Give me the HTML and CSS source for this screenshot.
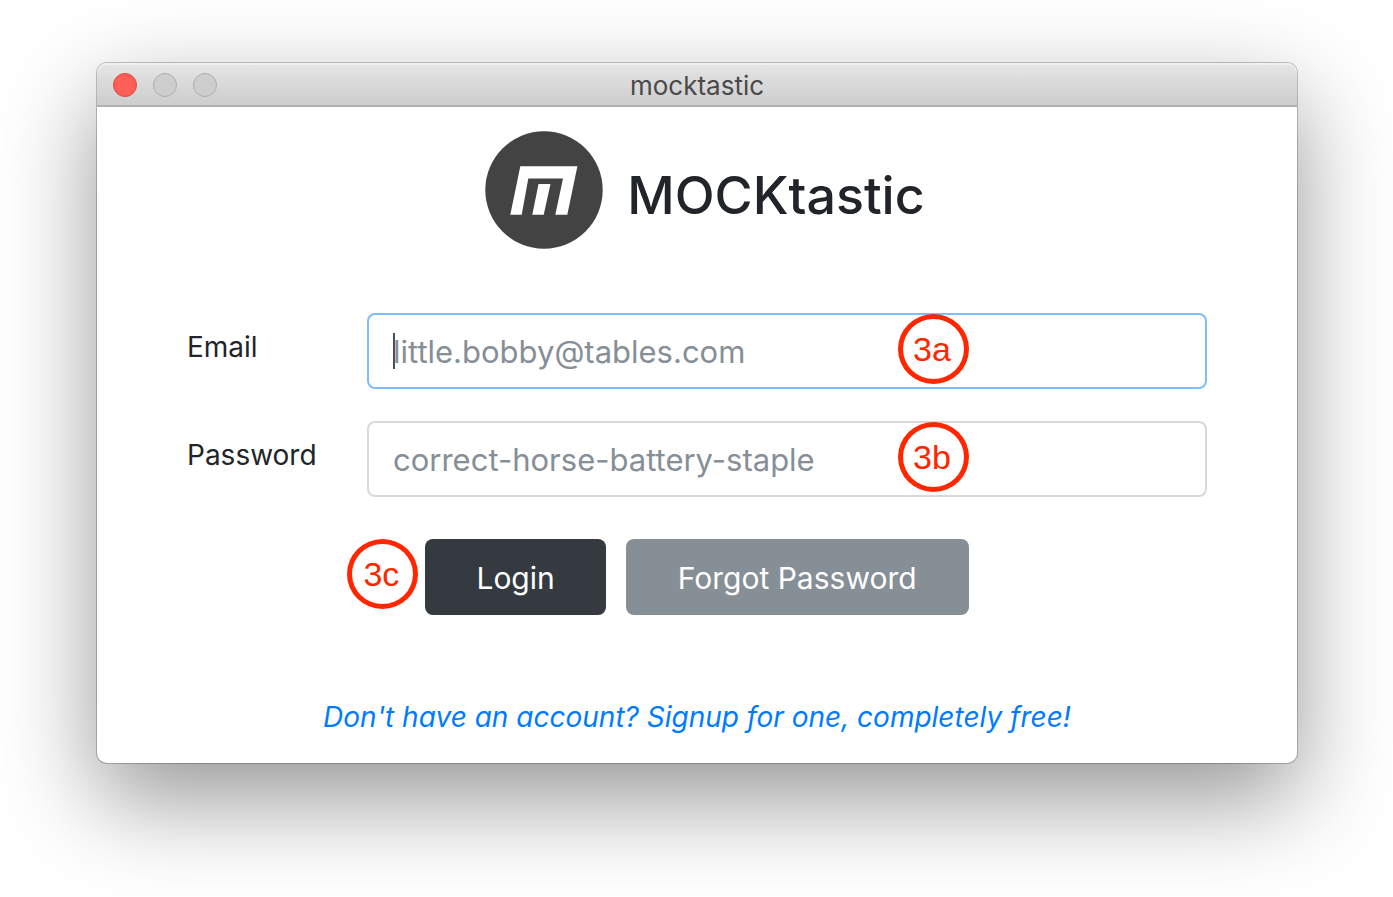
FILE: index.html
```html
<!DOCTYPE html>
<html lang="en">
<head>
<meta charset="utf-8">
<meta name="viewport" content="width=device-width, initial-scale=1">
<title>mocktastic</title>
<link rel="stylesheet" href="styles.css">
</head>
<body>
<main class="window">
  <header class="titlebar">
    <div class="controls">
      <button class="control control-close" type="button" aria-label="Close"></button>
      <button class="control" type="button" aria-label="Minimize"></button>
      <button class="control" type="button" aria-label="Zoom"></button>
    </div>
    <span class="window-title">mocktastic</span>
  </header>
  <div class="content">
    <div class="brand">
      <svg class="logo" viewBox="0 0 118 118" aria-hidden="true">
        <circle cx="59" cy="59" r="58.7" fill="#434344"/>
        <path fill="#fff" d="M35.3 35.2H92.4L82.3 83.7H70.3L78 47.5H43.3L36.7 83.7H25.3ZM53.5 53H65.5L58.7 83.7H47.3Z"/>
      </svg>
      <h1 class="brand-name">MOCKtastic</h1>
    </div>
    <form class="form">
      <div class="field">
        <label class="label" for="email">Email</label>
        <div class="input-wrap">
          <input class="input input-active" id="email" type="email" placeholder="little.bobby@tables.com">
          <span class="caret"></span>
          <span class="badge badge-field">3a</span>
        </div>
      </div>
      <div class="field">
        <label class="label" for="password">Password</label>
        <div class="input-wrap">
          <input class="input" id="password" type="password" placeholder="correct-horse-battery-staple">
          <span class="badge badge-field">3b</span>
        </div>
      </div>
      <div class="actions">
        <button class="button button-dark" type="submit">Login</button>
        <button class="button button-gray" type="button">Forgot Password</button>
        <span class="badge badge-action">3c</span>
      </div>
    </form>
    <a class="signup" href="#signup">Don't have an account? Signup for one, completely free!</a>
  </div>
</main>
</body>
</html>
```
FILE: styles.css
```css
* {
  box-sizing: border-box;
}

body {
  margin: 0;
  padding: 63px 96px 134px 97px;
  background: #fff;
  color: #212529;
  font-family: Inter, "Liberation Sans", sans-serif;
}

.window {
  border-radius: 10px;
  background: #fff;
  box-shadow: 0 0 0 1px rgba(0, 0, 0, 0.22), 0 36px 96px rgba(0, 0, 0, 0.42);
}

.titlebar {
  display: grid;
  grid-template-columns: 1fr auto 1fr;
  align-items: center;
  height: 44px;
  padding: 2px 16px 0;
  border-bottom: 2px solid #b0b0b0;
  border-radius: 10px 10px 0 0;
  background: linear-gradient(#e6e6e6, #cdcdcd);
  box-shadow: inset 0 2px 0 #f0f0f0;
}

.controls {
  display: flex;
  gap: 16px;
}

.control {
  width: 24px;
  height: 24px;
  padding: 0;
  border: 1px solid #adadad;
  border-radius: 50%;
  background: #cecece;
}

.control-close {
  border-color: #e2463f;
  background: #ff5f57;
}

.window-title {
  padding-top: 2px;
  color: #4a4a4a;
  font-size: 26px;
  line-height: 32px;
}

.content {
  display: flex;
  flex-direction: column;
  align-items: center;
  padding: 24px 90px 25px;
}

.brand {
  display: flex;
  align-items: center;
  gap: 24px;
  padding-left: 16px;
}

.logo {
  width: 118px;
  height: 118px;
}

.brand-name {
  margin: 0;
  padding-top: 12px;
  font-size: 52px;
  font-weight: 500;
  line-height: 64px;
}

.form {
  display: flex;
  flex-direction: column;
  width: 100%;
  gap: 32px;
  margin-top: 64px;
}

.field {
  display: grid;
  grid-template-columns: 180px 1fr;
}

.label {
  padding-top: 13px;
  font-size: 28px;
  line-height: 42px;
}

.input-wrap {
  position: relative;
}

.input {
  display: block;
  width: 100%;
  height: 76px;
  padding: 0 24px;
  border: 2px solid #d9d9d9;
  border-radius: 8px;
  outline: 0;
  background: #fff;
  color: #495057;
  font: inherit;
  font-size: 31px;
}

.input-active {
  border-color: #80bdff;
}

.input::placeholder {
  color: #868e96;
  opacity: 1;
}

.caret {
  position: absolute;
  top: 20px;
  left: 26px;
  width: 2px;
  height: 36px;
  background: #495057;
}

.badge {
  position: absolute;
  display: flex;
  align-items: center;
  justify-content: center;
  width: 71px;
  height: 70px;
  padding-right: 3px;
  border: 5px solid #ff2600;
  border-radius: 50%;
  color: #ff2600;
  font-family: "Liberation Sans", sans-serif;
  font-size: 34px;
  line-height: 40px;
}

.badge-field {
  top: 1px;
  right: 238px;
}

.badge-action {
  top: 0;
  right: 100%;
  margin-right: 7px;
}

.actions {
  position: relative;
  display: flex;
  align-self: center;
  gap: 20px;
  margin-top: 10px;
}

.button {
  height: 76px;
  padding: 2px 51px 0;
  border: 0;
  border-radius: 8px;
  color: #fff;
  font: inherit;
  font-size: 30px;
}

.button-dark {
  background: #343a40;
}

.button-gray {
  padding: 2px 52px 0;
  background: #868e96;
}

.signup {
  margin-top: 81px;
  color: #007bff;
  font-size: 28px;
  font-style: italic;
  line-height: 42px;
  text-decoration: none;
}
```
